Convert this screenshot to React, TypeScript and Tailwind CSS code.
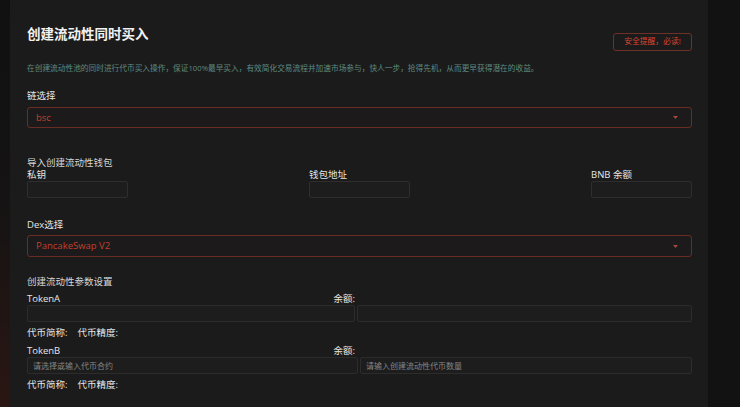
import React from 'react';

const font = { fontFamily: '"Open Sans", "Noto Sans CJK SC", sans-serif' };

function Caret() {
  return (
    <svg width="5" height="3" viewBox="0 0 5 3" className="shrink-0">
      <path d="M0 0 L5 0 L2.5 3 Z" fill="#a8483a" />
    </svg>
  );
}

function Select({ value, h }: { value: string; h: string }) {
  return (
    <div
      className={`flex ${h} items-center justify-between rounded-[3px] border border-[#6a2d25] bg-[#1c1a1a] pl-[8px] pr-[13px]`}
    >
      <span className="text-[9.5px] leading-none text-[#c2402f]">{value}</span>
      <Caret />
    </div>
  );
}

function Field({ label }: { label: string }) {
  return (
    <div className="flex w-[101px] flex-col">
      <span className="h-[12px] text-[9.5px] leading-[12px] text-[#e6e6e6]">{label}</span>
      <div className="h-[17px] rounded-[2px] border border-[#2e2e2e] bg-[#1d1d1d]" />
    </div>
  );
}

function TokenBlock({ name, leftW, ph1, ph2 }: { name: string; leftW: string; ph1?: string; ph2?: string }) {
  return (
    <div className="flex flex-col">
      <div className="flex h-[12px] items-center text-[9.5px] text-[#e6e6e6]">
        <div className="flex w-[328px] justify-between">
          <span>{name}</span>
          <span>余额:</span>
        </div>
      </div>
      <div className="flex h-[17px] gap-[2px]">
        <div className={`${leftW} flex items-center rounded-[2px] border border-[#2c2c2c] bg-[#1d1d1d] px-[5px] text-[8px] text-[#858585]`}>
          {ph1}
        </div>
        <div className="flex flex-1 items-center rounded-[2px] border border-[#2c2c2c] bg-[#1d1d1d] px-[5px] text-[8px] text-[#858585]">
          {ph2}
        </div>
      </div>
      <div className="mt-[5px] flex h-[12px] items-center gap-[10px] text-[9.5px] text-[#e6e6e6]">
        <span>代币简称:</span>
        <span>代币精度:</span>
      </div>
    </div>
  );
}

export default function App() {
  return (
    <div className="flex h-[407px] w-[740px] overflow-hidden bg-[#121212]" style={font}>
      <div className="w-[10px] shrink-0 bg-gradient-to-b from-[#111111] via-[#151313] to-[#2a1613]" />
      <main className="flex w-[698px] shrink-0 flex-col bg-[#1b1b1b] pl-[17px] pr-[16px]">
        <div className="flex items-start justify-between pt-[24px]">
          <h1 className="h-[20px] text-[13.5px] font-bold leading-[20px] text-[#f2f2f2]">创建流动性同时买入</h1>
          <button className="mt-[9px] flex h-[18px] w-[79px] items-center justify-center rounded-[3px] border border-[#6e3128] text-[7.8px] text-[#d8432f]">
            安全提醒，必读!
          </button>
        </div>

        <p className="mt-[11px] h-[12px] text-[7.7px] leading-[12px] text-[#5d8a80]">
          在创建流动性池的同时进行代币买入操作，保证100%最早买入，有效简化交易流程并加速市场参与，快人一步，抢得先机，从而更早获得潜在的收益。
        </p>

        <label className="mt-[15px] h-[14px] text-[9.5px] leading-[14px] text-[#e6e6e6]">链选择</label>
        <div className="mt-[4px]">
          <Select value="bsc" h="h-[21px]" />
        </div>

        <div className="mt-[28px] h-[13px] text-[9.5px] leading-[13px] text-[#d6d6d6]">导入创建流动性钱包</div>
        <div className="flex justify-between">
          <Field label="私钥" />
          <Field label="钱包地址" />
          <Field label="BNB 余额" />
        </div>

        <label className="mt-[20px] h-[14px] text-[9.5px] leading-[14px] text-[#e6e6e6]">Dex选择</label>
        <div className="mt-[3px]">
          <Select value="PancakeSwap V2" h="h-[22px]" />
        </div>

        <div className="mt-[18px] h-[13px] text-[9.5px] leading-[13px] text-[#d6d6d6]">创建流动性参数设置</div>
        <div className="mt-[5px]">
          <TokenBlock name="TokenA" leftW="w-[328px]" />
        </div>
        <div className="mt-[6px]">
          <TokenBlock name="TokenB" leftW="w-[331px]" ph1="请选择或输入代币合约" ph2="请输入创建流动性代币数量" />
        </div>
      </main>
      <div className="flex-1 bg-[#121212]" />
    </div>
  );
}
